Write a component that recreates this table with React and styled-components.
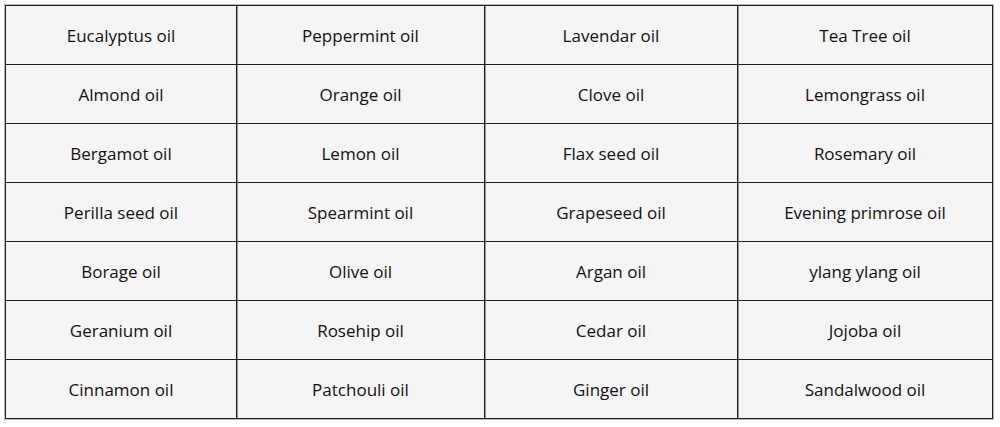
import React from "react";
import styled, { createGlobalStyle } from "styled-components";

const oils = [
  ["Eucalyptus oil", "Peppermint oil", "Lavendar oil", "Tea Tree oil"],
  ["Almond oil", "Orange oil", "Clove oil", "Lemongrass oil"],
  ["Bergamot oil", "Lemon oil", "Flax seed oil", "Rosemary oil"],
  ["Perilla seed oil", "Spearmint oil", "Grapeseed oil", "Evening primrose oil"],
  ["Borage oil", "Olive oil", "Argan oil", "ylang ylang oil"],
  ["Geranium oil", "Rosehip oil", "Cedar oil", "Jojoba oil"],
  ["Cinnamon oil", "Patchouli oil", "Ginger oil", "Sandalwood oil"],
];

const GlobalStyle = createGlobalStyle`
  body {
    margin: 0;
    background: #ffffff;
    font-family: "Comic Sans MS", "Open Sans", "DejaVu Sans", sans-serif;
  }
`;

const Frame = styled.div`
  margin: 4px 0 0 4px;
  width: 988px;
  border: 1px solid #b8b8b8;
`;

const Grid = styled.div`
  display: grid;
  grid-template-columns: 231px 248px 253px 255px;
  grid-auto-rows: 59px;
  border-top: 1px solid #1e1e1e;
  border-left: 1px solid #1e1e1e;
`;

const Cell = styled.div`
  display: flex;
  align-items: center;
  justify-content: center;
  background: #f5f5f5;
  border-right: 1px solid #1e1e1e;
  border-bottom: 1px solid #1e1e1e;
  box-shadow: ${({ $first }) => ($first ? "none" : "inset 1px 0 0 #9a9a9a")};
  font-size: 17px;
  color: #111;
`;

export default function App() {
  return (
    <>
      <GlobalStyle />
      <Frame>
        <Grid>
          {oils.flatMap((row, r) =>
            row.map((name, c) => (
              <Cell key={`${r}-${c}`} $first={c === 0}>
                {name}
              </Cell>
            ))
          )}
        </Grid>
      </Frame>
    </>
  );
}
